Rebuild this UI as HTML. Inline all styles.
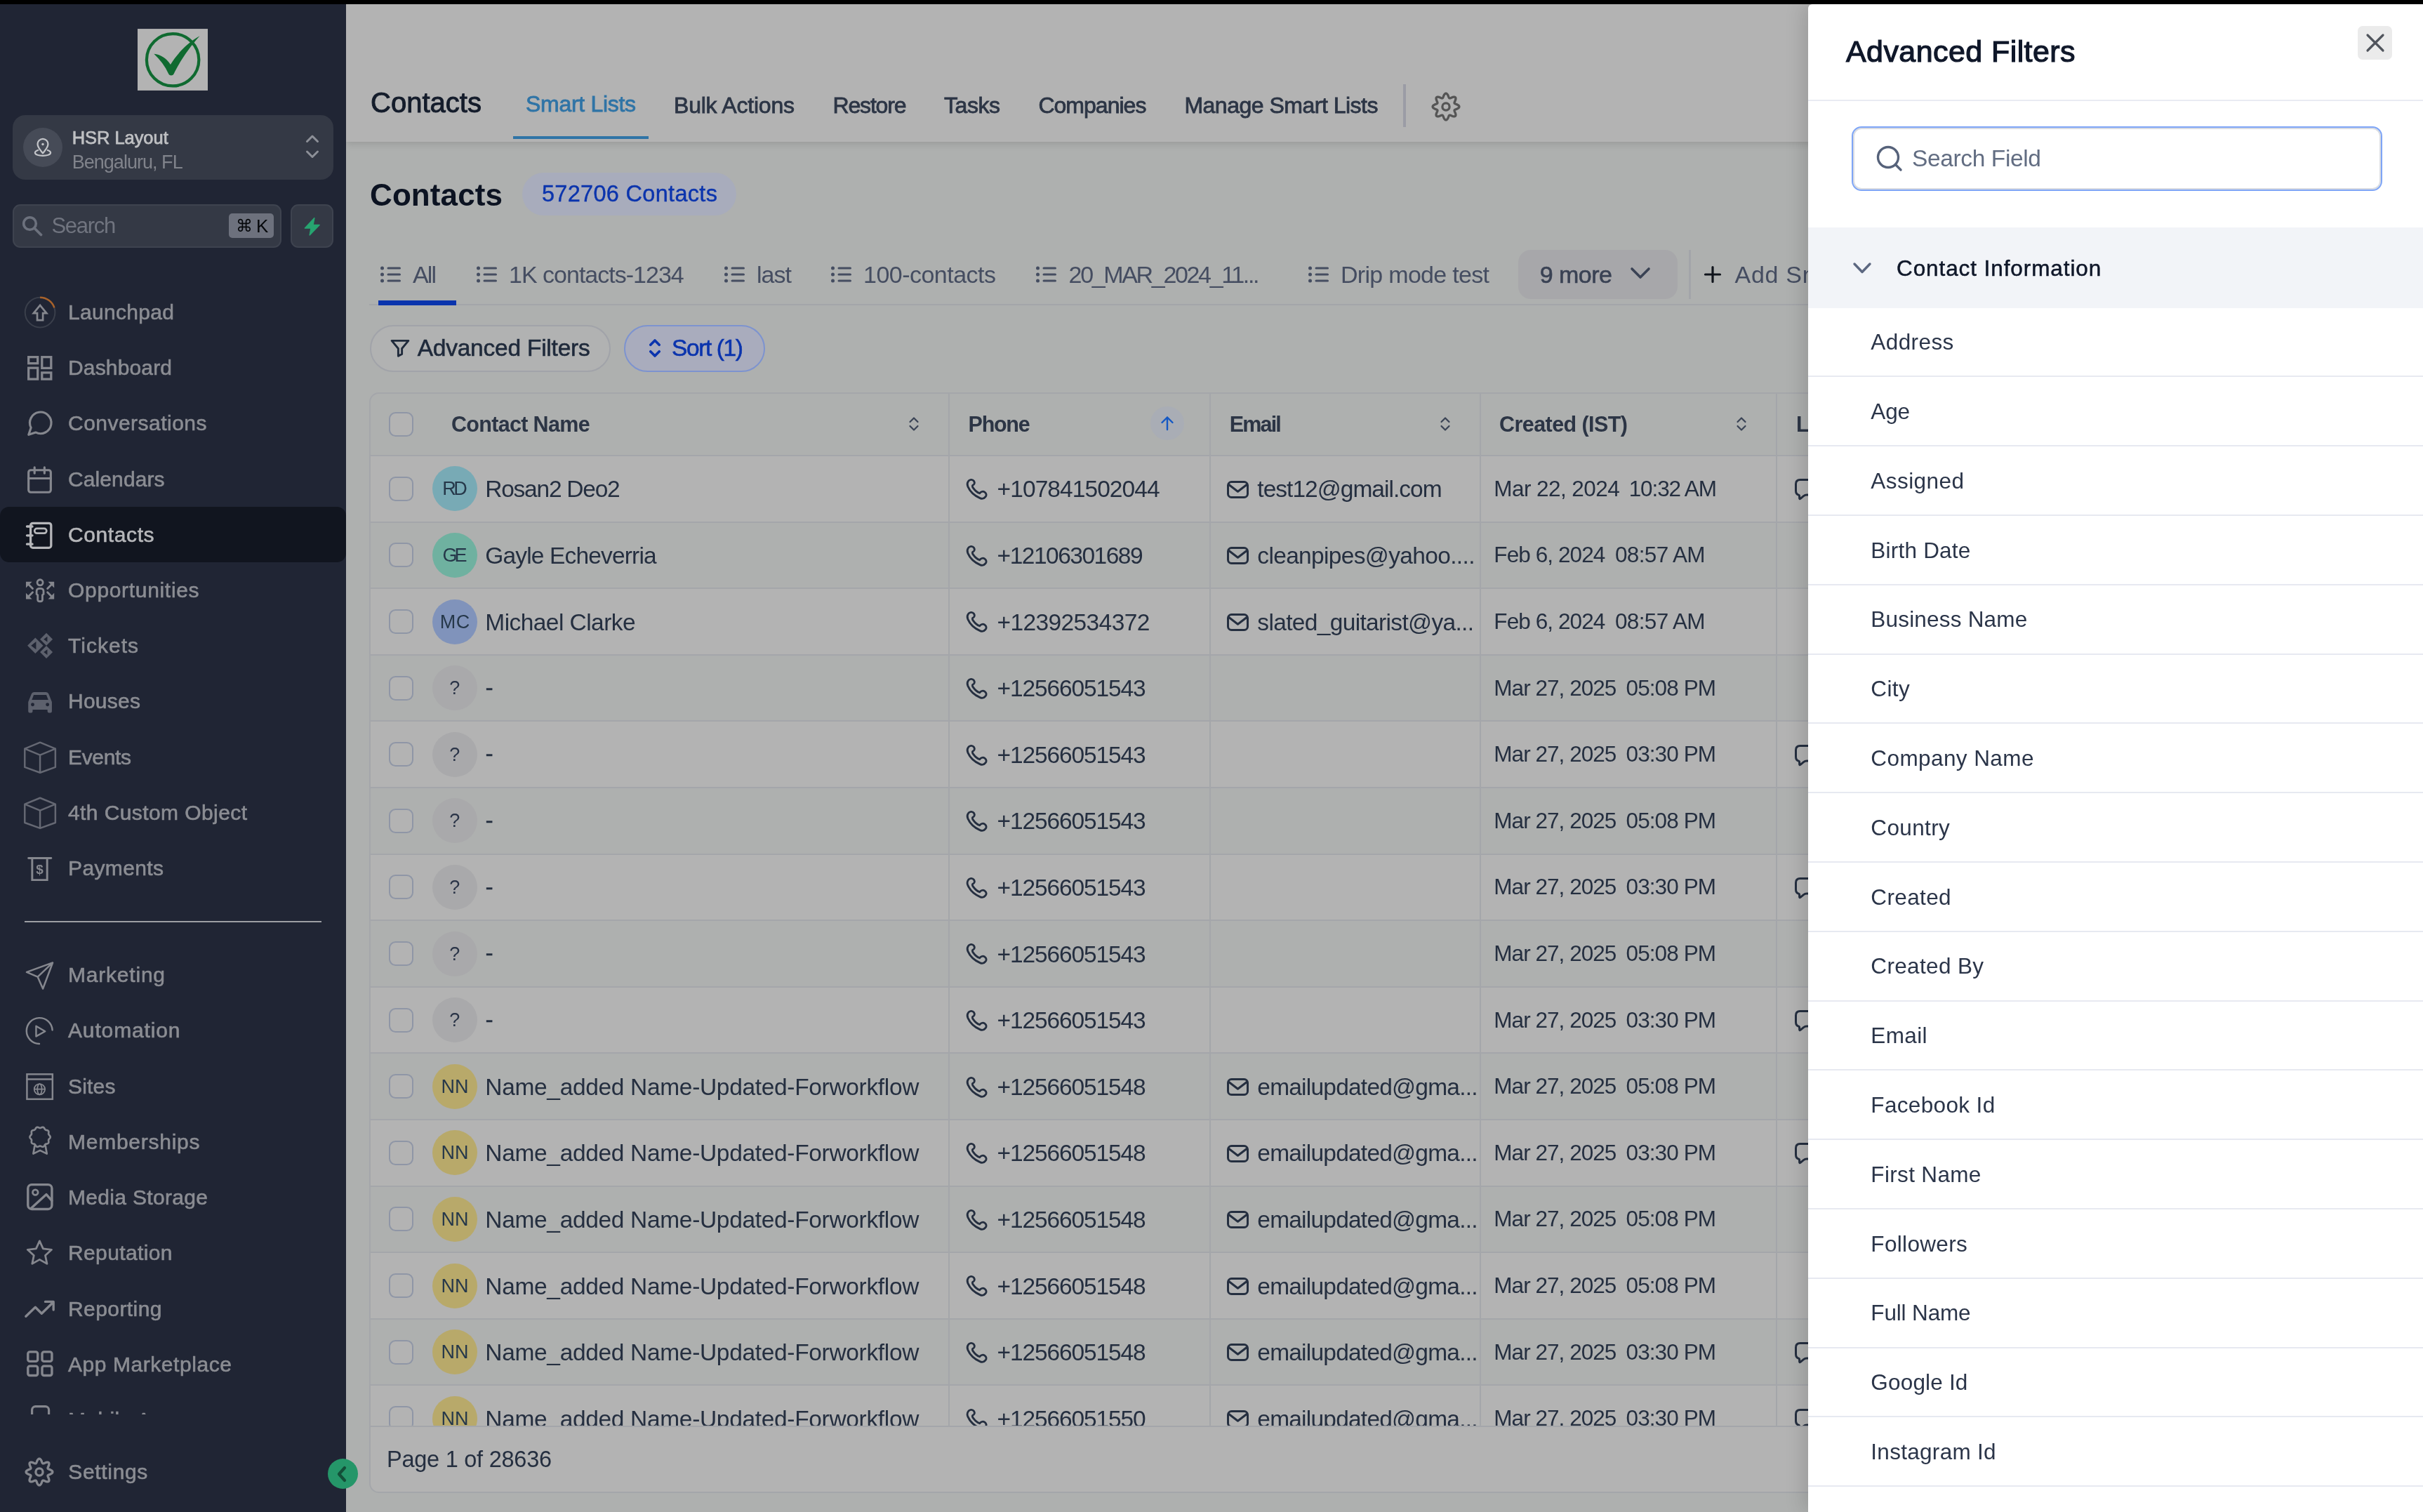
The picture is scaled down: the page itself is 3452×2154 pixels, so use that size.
<!DOCTYPE html>
<html lang="en"><head><meta charset="utf-8"><title>Contacts - Advanced Filters</title>
<style>
html,body{margin:0;padding:0;}
body{width:3452px;height:2154px;overflow:hidden;position:relative;background:#aeb0af;font-family:"Liberation Sans",sans-serif;}
span{position:absolute;white-space:nowrap;}
div{position:absolute;box-sizing:border-box;}
svg{position:absolute;overflow:visible;}
.ic{fill:none;stroke:#85878e;stroke-width:2.3;stroke-linecap:round;stroke-linejoin:round;}
#all{left:0;top:0;width:3452px;height:2154px;will-change:transform;}
</style></head><body><div id="all">

<div id="hdr" style="left:493px;top:6px;width:2959px;height:196px;background:#b3b3b3;box-shadow:0 3px 10px rgba(0,0,0,.13);"></div>
<span style="left:528.0px;top:120.0px;font-size:40px;line-height:52px;color:#141c2b;letter-spacing:0.02px;-webkit-text-stroke:0.95px #141c2b;">Contacts</span>
<span style="left:749.0px;top:127.0px;font-size:32px;line-height:42px;color:#2f74a6;letter-spacing:-0.30px;-webkit-text-stroke:0.8px #2f74a6;">Smart Lists</span>
<div style="left:731px;top:194px;width:193px;height:4px;background:#2f74a6;"></div>
<span style="left:960.0px;top:129.0px;font-size:32px;line-height:42px;color:#2c3545;letter-spacing:-0.21px;-webkit-text-stroke:0.8px #2c3545;">Bulk Actions</span>
<span style="left:1186.5px;top:129.0px;font-size:32px;line-height:42px;color:#2c3545;letter-spacing:-1.17px;-webkit-text-stroke:0.8px #2c3545;">Restore</span>
<span style="left:1345.0px;top:129.0px;font-size:32px;line-height:42px;color:#2c3545;letter-spacing:-0.45px;-webkit-text-stroke:0.8px #2c3545;">Tasks</span>
<span style="left:1479.4px;top:129.0px;font-size:32px;line-height:42px;color:#2c3545;letter-spacing:-0.98px;-webkit-text-stroke:0.8px #2c3545;">Companies</span>
<span style="left:1687.4px;top:129.0px;font-size:32px;line-height:42px;color:#2c3545;letter-spacing:-0.50px;-webkit-text-stroke:0.8px #2c3545;">Manage Smart Lists</span>
<div style="left:1999px;top:120px;width:4px;height:61px;background:#9b9ca5;"></div>
<svg style="left:2035.6px;top:127.9px" width="48" height="48" viewBox="0 0 48 48"><path d="M24.00 5.10 L24.66 5.22 L25.29 5.59 L25.88 6.16 L26.40 6.90 L26.87 7.75 L27.26 8.65 L27.61 9.53 L27.92 10.34 L28.22 11.01 L28.54 11.53 L28.91 11.85 L29.35 11.97 L29.89 11.92 L30.53 11.71 L31.27 11.40 L32.11 11.03 L33.00 10.65 L33.93 10.33 L34.85 10.11 L35.71 10.04 L36.48 10.14 L37.11 10.42 L37.58 10.89 L37.86 11.52 L37.96 12.29 L37.89 13.15 L37.67 14.07 L37.35 15.00 L36.97 15.89 L36.60 16.72 L36.29 17.47 L36.08 18.11 L36.03 18.65 L36.15 19.09 L36.47 19.46 L36.99 19.78 L37.66 20.08 L38.47 20.39 L39.35 20.74 L40.25 21.13 L41.10 21.60 L41.84 22.12 L42.41 22.71 L42.78 23.34 L42.90 24.00 L42.78 24.66 L42.41 25.29 L41.84 25.88 L41.10 26.40 L40.25 26.87 L39.35 27.26 L38.47 27.61 L37.66 27.92 L36.99 28.22 L36.47 28.54 L36.15 28.91 L36.03 29.35 L36.08 29.89 L36.29 30.53 L36.60 31.27 L36.97 32.11 L37.35 33.00 L37.67 33.93 L37.89 34.85 L37.96 35.71 L37.86 36.48 L37.58 37.11 L37.11 37.58 L36.48 37.86 L35.71 37.96 L34.85 37.89 L33.93 37.67 L33.00 37.35 L32.11 36.97 L31.27 36.60 L30.53 36.29 L29.89 36.08 L29.35 36.03 L28.91 36.15 L28.54 36.47 L28.22 36.99 L27.92 37.66 L27.61 38.47 L27.26 39.35 L26.87 40.25 L26.40 41.10 L25.88 41.84 L25.29 42.41 L24.66 42.78 L24.00 42.90 L23.34 42.78 L22.71 42.41 L22.12 41.84 L21.60 41.10 L21.13 40.25 L20.74 39.35 L20.39 38.47 L20.08 37.66 L19.78 36.99 L19.46 36.47 L19.09 36.15 L18.65 36.03 L18.11 36.08 L17.47 36.29 L16.72 36.60 L15.89 36.97 L15.00 37.35 L14.07 37.67 L13.15 37.89 L12.29 37.96 L11.52 37.86 L10.89 37.58 L10.42 37.11 L10.14 36.48 L10.04 35.71 L10.11 34.85 L10.33 33.93 L10.65 33.00 L11.03 32.11 L11.40 31.28 L11.71 30.53 L11.92 29.89 L11.97 29.35 L11.85 28.91 L11.53 28.54 L11.01 28.22 L10.34 27.92 L9.53 27.61 L8.65 27.26 L7.75 26.87 L6.90 26.40 L6.16 25.88 L5.59 25.29 L5.22 24.66 L5.10 24.00 L5.22 23.34 L5.59 22.71 L6.16 22.12 L6.90 21.60 L7.75 21.13 L8.65 20.74 L9.53 20.39 L10.34 20.08 L11.01 19.78 L11.53 19.46 L11.85 19.09 L11.97 18.65 L11.92 18.11 L11.71 17.47 L11.40 16.72 L11.03 15.89 L10.65 15.00 L10.33 14.07 L10.11 13.15 L10.04 12.29 L10.14 11.52 L10.42 10.89 L10.89 10.42 L11.52 10.14 L12.29 10.04 L13.15 10.11 L14.07 10.33 L15.00 10.65 L15.89 11.03 L16.72 11.40 L17.47 11.71 L18.11 11.92 L18.65 11.97 L19.09 11.85 L19.46 11.53 L19.78 11.01 L20.08 10.34 L20.39 9.53 L20.74 8.65 L21.13 7.75 L21.60 6.90 L22.12 6.16 L22.71 5.59 L23.34 5.22 Z" fill="none" stroke="#555555" stroke-width="3.3" stroke-linejoin="round"/><circle cx="24" cy="24" r="5.1" fill="none" stroke="#555555" stroke-width="3.3"/></svg>
<span style="left:527.0px;top:248.5px;font-size:44px;line-height:57px;color:#0c1322;font-weight:700;letter-spacing:0.11px;">Contacts</span>
<div style="left:744px;top:246px;width:305px;height:61px;border-radius:31px;background:#a8acbc;"></div>
<span style="left:772.0px;top:255.0px;font-size:32.5px;line-height:42px;color:#0b34ad;letter-spacing:0.30px;-webkit-text-stroke:0.4px #0b34ad;">572706 Contacts</span>
<div style="left:526px;top:433px;width:2926px;height:2px;background:#a3a5a9;"></div>
<div style="left:539px;top:428px;width:111px;height:7px;background:#0a34ad;"></div>
<svg style="left:541.6px;top:378.5px" width="30" height="24" viewBox="0 0 30 24"><circle cx="2.5" cy="3" r="2.5" fill="#454d61"/><rect x="9.5" y="1.4" width="19.5" height="3.2" rx="1.6" fill="#454d61"/><circle cx="2.5" cy="12" r="2.5" fill="#454d61"/><rect x="9.5" y="10.4" width="19.5" height="3.2" rx="1.6" fill="#454d61"/><circle cx="2.5" cy="21" r="2.5" fill="#454d61"/><rect x="9.5" y="19.4" width="19.5" height="3.2" rx="1.6" fill="#454d61"/></svg>
<span style="left:588.0px;top:368.5px;font-size:34px;line-height:44px;color:#454d61;letter-spacing:-1.89px;">All</span>
<svg style="left:679px;top:378.5px" width="30" height="24" viewBox="0 0 30 24"><circle cx="2.5" cy="3" r="2.5" fill="#454d61"/><rect x="9.5" y="1.4" width="19.5" height="3.2" rx="1.6" fill="#454d61"/><circle cx="2.5" cy="12" r="2.5" fill="#454d61"/><rect x="9.5" y="10.4" width="19.5" height="3.2" rx="1.6" fill="#454d61"/><circle cx="2.5" cy="21" r="2.5" fill="#454d61"/><rect x="9.5" y="19.4" width="19.5" height="3.2" rx="1.6" fill="#454d61"/></svg>
<span style="left:725.0px;top:368.5px;font-size:34px;line-height:44px;color:#454d61;letter-spacing:-0.99px;">1K contacts-1234</span>
<svg style="left:1032px;top:378.5px" width="30" height="24" viewBox="0 0 30 24"><circle cx="2.5" cy="3" r="2.5" fill="#454d61"/><rect x="9.5" y="1.4" width="19.5" height="3.2" rx="1.6" fill="#454d61"/><circle cx="2.5" cy="12" r="2.5" fill="#454d61"/><rect x="9.5" y="10.4" width="19.5" height="3.2" rx="1.6" fill="#454d61"/><circle cx="2.5" cy="21" r="2.5" fill="#454d61"/><rect x="9.5" y="19.4" width="19.5" height="3.2" rx="1.6" fill="#454d61"/></svg>
<span style="left:1078.0px;top:368.5px;font-size:34px;line-height:44px;color:#454d61;letter-spacing:-0.97px;">last</span>
<svg style="left:1184px;top:378.5px" width="30" height="24" viewBox="0 0 30 24"><circle cx="2.5" cy="3" r="2.5" fill="#454d61"/><rect x="9.5" y="1.4" width="19.5" height="3.2" rx="1.6" fill="#454d61"/><circle cx="2.5" cy="12" r="2.5" fill="#454d61"/><rect x="9.5" y="10.4" width="19.5" height="3.2" rx="1.6" fill="#454d61"/><circle cx="2.5" cy="21" r="2.5" fill="#454d61"/><rect x="9.5" y="19.4" width="19.5" height="3.2" rx="1.6" fill="#454d61"/></svg>
<span style="left:1230.0px;top:368.5px;font-size:34px;line-height:44px;color:#454d61;letter-spacing:-0.52px;">100-contacts</span>
<svg style="left:1476px;top:378.5px" width="30" height="24" viewBox="0 0 30 24"><circle cx="2.5" cy="3" r="2.5" fill="#454d61"/><rect x="9.5" y="1.4" width="19.5" height="3.2" rx="1.6" fill="#454d61"/><circle cx="2.5" cy="12" r="2.5" fill="#454d61"/><rect x="9.5" y="10.4" width="19.5" height="3.2" rx="1.6" fill="#454d61"/><circle cx="2.5" cy="21" r="2.5" fill="#454d61"/><rect x="9.5" y="19.4" width="19.5" height="3.2" rx="1.6" fill="#454d61"/></svg>
<span style="left:1522.6px;top:368.5px;font-size:34px;line-height:44px;color:#454d61;letter-spacing:-2.34px;">20_MAR_2024_11...</span>
<svg style="left:1864px;top:378.5px" width="30" height="24" viewBox="0 0 30 24"><circle cx="2.5" cy="3" r="2.5" fill="#454d61"/><rect x="9.5" y="1.4" width="19.5" height="3.2" rx="1.6" fill="#454d61"/><circle cx="2.5" cy="12" r="2.5" fill="#454d61"/><rect x="9.5" y="10.4" width="19.5" height="3.2" rx="1.6" fill="#454d61"/><circle cx="2.5" cy="21" r="2.5" fill="#454d61"/><rect x="9.5" y="19.4" width="19.5" height="3.2" rx="1.6" fill="#454d61"/></svg>
<span style="left:1910.0px;top:368.5px;font-size:34px;line-height:44px;color:#454d61;letter-spacing:-0.70px;">Drip mode test</span>
<div style="left:2163px;top:356px;width:227px;height:70px;border-radius:18px;background:#a7a7aa;"></div>
<span style="left:2193.8px;top:368.5px;font-size:34px;line-height:44px;color:#3a4254;letter-spacing:-0.56px;-webkit-text-stroke:0.6px #3a4254;">9 more</span>
<svg style="left:2323px;top:380px" width="28" height="20" viewBox="0 0 28 20"><path d="M2 3 L14 15 L26 3" fill="none" stroke="#3a4254" stroke-width="3.6" stroke-linecap="round" stroke-linejoin="round"/></svg>
<div style="left:2406px;top:356px;width:3px;height:70px;background:#a3a5a9;"></div>
<svg style="left:2428px;top:379px" width="24" height="24" viewBox="0 0 24 24"><path d="M12 1.5V22.5M1.5 12H22.5" fill="none" stroke="#10141c" stroke-width="3.2" stroke-linecap="round"/></svg>
<span style="left:2471.6px;top:368.5px;font-size:34px;line-height:44px;color:#454d61;letter-spacing:0.69px;">Add Smart List</span>
<div style="left:527px;top:463px;width:343px;height:67px;border-radius:34px;border:2px solid #a1a3a9;background:#b1b2b2;"></div>
<svg style="left:555px;top:481px" width="30" height="30" viewBox="0 0 24 24"><path d="M2.5 3.5h19l-7.4 8.9v6.4l-4.2 2.1v-8.5z" fill="none" stroke="#1f2a3b" stroke-width="2.3" stroke-linejoin="round" stroke-linecap="round"/></svg>
<span style="left:594.7px;top:474.0px;font-size:33.5px;line-height:44px;color:#1f2a3b;letter-spacing:-0.23px;-webkit-text-stroke:0.6px #1f2a3b;">Advanced Filters</span>
<div style="left:889px;top:463px;width:201px;height:67px;border-radius:34px;border:2px solid #7d93cf;background:#a9acbd;"></div>
<svg style="left:922px;top:479px" width="22" height="34" viewBox="0 0 22 34"><path d="M4.8 12.3 L11 6 L17.2 12.3 M4.8 21.7 L11 28 L17.2 21.7" fill="none" stroke="#0b34ad" stroke-width="3.6" stroke-linecap="round" stroke-linejoin="round"/></svg>
<span style="left:957.0px;top:474.0px;font-size:33.5px;line-height:44px;color:#0b34ad;letter-spacing:-1.39px;-webkit-text-stroke:0.6px #0b34ad;">Sort (1)</span>
<div style="left:526px;top:559px;width:3000px;height:1568px;border:2px solid #a4a6aa;border-radius:14px;background:#aeb0af;overflow:hidden;" id="tbl">
<div style="left:0;top:0;width:3000px;height:89px;background:#aeb0af;border-bottom:2px solid #a4a6aa;"></div>
<div style="left:26.2px;top:26.0px;width:35px;height:35px;border:2px solid #8f96a6;border-radius:9.5px;background:#b3b3b3;"></div>
<span style="left:115.0px;top:22.5px;font-size:30.5px;line-height:40px;color:#2c3545;font-weight:700;letter-spacing:-0.68px;">Contact Name</span>
<span style="left:851.6px;top:22.5px;font-size:30.5px;line-height:40px;color:#2c3545;font-weight:700;letter-spacing:-1.30px;">Phone</span>
<span style="left:1223.8px;top:22.5px;font-size:30.5px;line-height:40px;color:#2c3545;font-weight:700;letter-spacing:-1.84px;">Email</span>
<span style="left:1608.0px;top:22.5px;font-size:30.5px;line-height:40px;color:#2c3545;font-weight:700;letter-spacing:-0.57px;">Created (IST)</span>
<span style="left:2031.0px;top:22.5px;font-size:30.5px;line-height:40px;color:#2c3545;font-weight:700;letter-spacing:-0.85px;">Last Activity</span>
<svg style="left:766.4px;top:31.0px" width="16" height="24" viewBox="0 0 16 24"><path d="M2.5 9 L8 3.5 L13.5 9 M2.5 15 L8 20.5 L13.5 15" fill="none" stroke="#3a4355" stroke-width="2.2" stroke-linecap="round" stroke-linejoin="round"/></svg>
<svg style="left:1523.3px;top:31.0px" width="16" height="24" viewBox="0 0 16 24"><path d="M2.5 9 L8 3.5 L13.5 9 M2.5 15 L8 20.5 L13.5 15" fill="none" stroke="#3a4355" stroke-width="2.2" stroke-linecap="round" stroke-linejoin="round"/></svg>
<svg style="left:1945.0px;top:31.0px" width="16" height="24" viewBox="0 0 16 24"><path d="M2.5 9 L8 3.5 L13.5 9 M2.5 15 L8 20.5 L13.5 15" fill="none" stroke="#3a4355" stroke-width="2.2" stroke-linecap="round" stroke-linejoin="round"/></svg>
<div style="left:1111px;top:18px;width:48px;height:48px;border-radius:24px;background:#a9adb5;"></div>
<svg style="left:1125px;top:31px" width="20" height="22" viewBox="0 0 20 22"><path d="M10 20 V2.5 M2.5 10 L10 2.5 L17.5 10" fill="none" stroke="#1458c4" stroke-width="2.4" stroke-linecap="round" stroke-linejoin="round"/></svg>
<div style="left:0;top:89px;width:3000px;height:95px;background:#b3b3b3;border-bottom:2px solid #a4a6aa;"></div>
<div style="left:26.2px;top:117.8px;width:35px;height:35px;border:2px solid #8f96a6;border-radius:9.5px;background:#b3b3b3;"></div>
<div style="left:88px;top:103.3px;width:64px;height:64px;border-radius:32px;background:#78aab5;"></div>
<span style="left:102.2px;top:118.3px;font-size:27px;line-height:35px;color:#26384a;letter-spacing:-3.50px;">RD</span>
<span style="left:163.3px;top:114.3px;font-size:33.5px;line-height:44px;color:#252f40;letter-spacing:-1.25px;">Rosan2 Deo2</span>
<svg style="left:849.1px;top:121.1px" width="29.7" height="29.7" viewBox="230 290 400 400"><path d="M262 340 C285 300 345 295 372 335 C395 370 380 400 350 415 C335 425 345 450 360 470 C395 520 440 555 480 570 C500 545 540 520 575 545 C615 575 620 610 590 640 C565 670 530 680 495 665 C400 625 300 545 255 440 C240 405 245 365 262 340 Z" fill="none" stroke="#252f40" stroke-width="38" stroke-linejoin="round" stroke-linecap="round"/></svg>
<span style="left:892.6px;top:114.3px;font-size:33.5px;line-height:44px;color:#252f40;letter-spacing:-0.93px;">+107841502044</span>
<svg style="left:1220px;top:123.5px" width="31" height="25" viewBox="0 0 31 25"><rect x="1.5" y="1.5" width="28" height="22" rx="5" fill="none" stroke="#252f40" stroke-width="3"/><path d="M2.8 5.5 L15.5 15.3 L28.2 5.5" fill="none" stroke="#252f40" stroke-width="3" stroke-linejoin="round" stroke-linecap="round"/></svg>
<span style="left:1263.3px;top:114.3px;font-size:33.5px;line-height:44px;color:#252f40;letter-spacing:-0.97px;">test12@gmail.com</span>
<span style="left:1600.3px;top:114.8px;font-size:31.5px;line-height:41px;color:#252f40;letter-spacing:-0.56px;">Mar 22, 2024</span>
<span style="left:1792.7px;top:114.8px;font-size:31.5px;line-height:41px;color:#252f40;letter-spacing:-1.11px;">10:32 AM</span>
<svg style="left:2029px;top:121.3px" width="32" height="32" viewBox="0 0 32 32"><path d="M1.5 7.5 Q1.5 1.5 7.5 1.5 H24.5 Q30.5 1.5 30.5 7.5 V17 Q30.5 23 24.5 23 H17 Q14.5 23 12.5 24.6 L8 28.3 Q6.6 29.3 6.6 27.6 V25 Q6.6 23.3 5.2 23 Q1.5 22 1.5 17 Z" fill="none" stroke="#252f40" stroke-width="3" stroke-linejoin="round"/></svg>
<div style="left:0;top:184px;width:3000px;height:94px;background:#aeb0af;border-bottom:2px solid #a4a6aa;"></div>
<div style="left:26.2px;top:212.4px;width:35px;height:35px;border:2px solid #8f96a6;border-radius:9.5px;background:#b3b3b3;"></div>
<div style="left:88px;top:197.9px;width:64px;height:64px;border-radius:32px;background:#6fb1a0;"></div>
<span style="left:102.5px;top:212.9px;font-size:27px;line-height:35px;color:#26384a;letter-spacing:-4.01px;">GE</span>
<span style="left:163.3px;top:208.9px;font-size:33.5px;line-height:44px;color:#252f40;letter-spacing:-0.84px;">Gayle Echeverria</span>
<svg style="left:849.1px;top:215.7px" width="29.7" height="29.7" viewBox="230 290 400 400"><path d="M262 340 C285 300 345 295 372 335 C395 370 380 400 350 415 C335 425 345 450 360 470 C395 520 440 555 480 570 C500 545 540 520 575 545 C615 575 620 610 590 640 C565 670 530 680 495 665 C400 625 300 545 255 440 C240 405 245 365 262 340 Z" fill="none" stroke="#252f40" stroke-width="38" stroke-linejoin="round" stroke-linecap="round"/></svg>
<span style="left:892.6px;top:208.9px;font-size:33.5px;line-height:44px;color:#252f40;letter-spacing:-1.50px;">+12106301689</span>
<svg style="left:1220px;top:218.1px" width="31" height="25" viewBox="0 0 31 25"><rect x="1.5" y="1.5" width="28" height="22" rx="5" fill="none" stroke="#252f40" stroke-width="3"/><path d="M2.8 5.5 L15.5 15.3 L28.2 5.5" fill="none" stroke="#252f40" stroke-width="3" stroke-linejoin="round" stroke-linecap="round"/></svg>
<span style="left:1263.3px;top:208.9px;font-size:33.5px;line-height:44px;color:#252f40;letter-spacing:-0.66px;">cleanpipes@yahoo....</span>
<span style="left:1600.3px;top:209.4px;font-size:31.5px;line-height:41px;color:#252f40;letter-spacing:-0.91px;">Feb 6, 2024</span>
<span style="left:1773.0px;top:209.4px;font-size:31.5px;line-height:41px;color:#252f40;letter-spacing:-0.66px;">08:57 AM</span>
<div style="left:0;top:278px;width:3000px;height:95px;background:#b3b3b3;border-bottom:2px solid #a4a6aa;"></div>
<div style="left:26.2px;top:307.0px;width:35px;height:35px;border:2px solid #8f96a6;border-radius:9.5px;background:#b3b3b3;"></div>
<div style="left:88px;top:292.5px;width:64px;height:64px;border-radius:32px;background:#8093bb;"></div>
<span style="left:98.8px;top:307.5px;font-size:27px;line-height:35px;color:#26384a;letter-spacing:0.51px;">MC</span>
<span style="left:163.3px;top:303.5px;font-size:33.5px;line-height:44px;color:#252f40;letter-spacing:-0.56px;">Michael Clarke</span>
<svg style="left:849.1px;top:310.3px" width="29.7" height="29.7" viewBox="230 290 400 400"><path d="M262 340 C285 300 345 295 372 335 C395 370 380 400 350 415 C335 425 345 450 360 470 C395 520 440 555 480 570 C500 545 540 520 575 545 C615 575 620 610 590 640 C565 670 530 680 495 665 C400 625 300 545 255 440 C240 405 245 365 262 340 Z" fill="none" stroke="#252f40" stroke-width="38" stroke-linejoin="round" stroke-linecap="round"/></svg>
<span style="left:892.6px;top:303.5px;font-size:33.5px;line-height:44px;color:#252f40;letter-spacing:-0.62px;">+12392534372</span>
<svg style="left:1220px;top:312.7px" width="31" height="25" viewBox="0 0 31 25"><rect x="1.5" y="1.5" width="28" height="22" rx="5" fill="none" stroke="#252f40" stroke-width="3"/><path d="M2.8 5.5 L15.5 15.3 L28.2 5.5" fill="none" stroke="#252f40" stroke-width="3" stroke-linejoin="round" stroke-linecap="round"/></svg>
<span style="left:1263.3px;top:303.5px;font-size:33.5px;line-height:44px;color:#252f40;letter-spacing:-0.66px;">slated_guitarist@ya...</span>
<span style="left:1600.3px;top:304.0px;font-size:31.5px;line-height:41px;color:#252f40;letter-spacing:-0.91px;">Feb 6, 2024</span>
<span style="left:1773.0px;top:304.0px;font-size:31.5px;line-height:41px;color:#252f40;letter-spacing:-0.66px;">08:57 AM</span>
<div style="left:0;top:373px;width:3000px;height:94px;background:#aeb0af;border-bottom:2px solid #a4a6aa;"></div>
<div style="left:26.2px;top:401.6px;width:35px;height:35px;border:2px solid #8f96a6;border-radius:9.5px;background:#b3b3b3;"></div>
<div style="left:88px;top:387.1px;width:64px;height:64px;border-radius:32px;background:#a9a9ab;"></div>
<span style="left:112.2px;top:402.1px;font-size:27px;line-height:35px;color:#2a3447;">?</span>
<span style="left:163.5px;top:396.7px;font-size:33.5px;line-height:44px;color:#252f40;-webkit-text-stroke:0.3px #252f40;">-</span>
<svg style="left:849.1px;top:404.9px" width="29.7" height="29.7" viewBox="230 290 400 400"><path d="M262 340 C285 300 345 295 372 335 C395 370 380 400 350 415 C335 425 345 450 360 470 C395 520 440 555 480 570 C500 545 540 520 575 545 C615 575 620 610 590 640 C565 670 530 680 495 665 C400 625 300 545 255 440 C240 405 245 365 262 340 Z" fill="none" stroke="#252f40" stroke-width="38" stroke-linejoin="round" stroke-linecap="round"/></svg>
<span style="left:892.6px;top:398.1px;font-size:33.5px;line-height:44px;color:#252f40;letter-spacing:-1.14px;">+12566051543</span>
<span style="left:1600.3px;top:398.6px;font-size:31.5px;line-height:41px;color:#252f40;letter-spacing:-0.96px;">Mar 27, 2025</span>
<span style="left:1788.6px;top:398.6px;font-size:31.5px;line-height:41px;color:#252f40;letter-spacing:-0.92px;">05:08 PM</span>
<div style="left:0;top:467px;width:3000px;height:95px;background:#b3b3b3;border-bottom:2px solid #a4a6aa;"></div>
<div style="left:26.2px;top:496.2px;width:35px;height:35px;border:2px solid #8f96a6;border-radius:9.5px;background:#b3b3b3;"></div>
<div style="left:88px;top:481.7px;width:64px;height:64px;border-radius:32px;background:#a9a9ab;"></div>
<span style="left:112.2px;top:496.7px;font-size:27px;line-height:35px;color:#2a3447;">?</span>
<span style="left:163.5px;top:491.3px;font-size:33.5px;line-height:44px;color:#252f40;-webkit-text-stroke:0.3px #252f40;">-</span>
<svg style="left:849.1px;top:499.5px" width="29.7" height="29.7" viewBox="230 290 400 400"><path d="M262 340 C285 300 345 295 372 335 C395 370 380 400 350 415 C335 425 345 450 360 470 C395 520 440 555 480 570 C500 545 540 520 575 545 C615 575 620 610 590 640 C565 670 530 680 495 665 C400 625 300 545 255 440 C240 405 245 365 262 340 Z" fill="none" stroke="#252f40" stroke-width="38" stroke-linejoin="round" stroke-linecap="round"/></svg>
<span style="left:892.6px;top:492.7px;font-size:33.5px;line-height:44px;color:#252f40;letter-spacing:-1.14px;">+12566051543</span>
<span style="left:1600.3px;top:493.2px;font-size:31.5px;line-height:41px;color:#252f40;letter-spacing:-0.96px;">Mar 27, 2025</span>
<span style="left:1788.6px;top:493.2px;font-size:31.5px;line-height:41px;color:#252f40;letter-spacing:-0.92px;">03:30 PM</span>
<svg style="left:2029px;top:499.7px" width="32" height="32" viewBox="0 0 32 32"><path d="M1.5 7.5 Q1.5 1.5 7.5 1.5 H24.5 Q30.5 1.5 30.5 7.5 V17 Q30.5 23 24.5 23 H17 Q14.5 23 12.5 24.6 L8 28.3 Q6.6 29.3 6.6 27.6 V25 Q6.6 23.3 5.2 23 Q1.5 22 1.5 17 Z" fill="none" stroke="#252f40" stroke-width="3" stroke-linejoin="round"/></svg>
<div style="left:0;top:562px;width:3000px;height:95px;background:#aeb0af;border-bottom:2px solid #a4a6aa;"></div>
<div style="left:26.2px;top:590.8px;width:35px;height:35px;border:2px solid #8f96a6;border-radius:9.5px;background:#b3b3b3;"></div>
<div style="left:88px;top:576.3px;width:64px;height:64px;border-radius:32px;background:#a9a9ab;"></div>
<span style="left:112.2px;top:591.3px;font-size:27px;line-height:35px;color:#2a3447;">?</span>
<span style="left:163.5px;top:585.9px;font-size:33.5px;line-height:44px;color:#252f40;-webkit-text-stroke:0.3px #252f40;">-</span>
<svg style="left:849.1px;top:594.1px" width="29.7" height="29.7" viewBox="230 290 400 400"><path d="M262 340 C285 300 345 295 372 335 C395 370 380 400 350 415 C335 425 345 450 360 470 C395 520 440 555 480 570 C500 545 540 520 575 545 C615 575 620 610 590 640 C565 670 530 680 495 665 C400 625 300 545 255 440 C240 405 245 365 262 340 Z" fill="none" stroke="#252f40" stroke-width="38" stroke-linejoin="round" stroke-linecap="round"/></svg>
<span style="left:892.6px;top:587.3px;font-size:33.5px;line-height:44px;color:#252f40;letter-spacing:-1.14px;">+12566051543</span>
<span style="left:1600.3px;top:587.8px;font-size:31.5px;line-height:41px;color:#252f40;letter-spacing:-0.96px;">Mar 27, 2025</span>
<span style="left:1788.6px;top:587.8px;font-size:31.5px;line-height:41px;color:#252f40;letter-spacing:-0.92px;">05:08 PM</span>
<div style="left:0;top:657px;width:3000px;height:94px;background:#b3b3b3;border-bottom:2px solid #a4a6aa;"></div>
<div style="left:26.2px;top:685.4px;width:35px;height:35px;border:2px solid #8f96a6;border-radius:9.5px;background:#b3b3b3;"></div>
<div style="left:88px;top:670.9px;width:64px;height:64px;border-radius:32px;background:#a9a9ab;"></div>
<span style="left:112.2px;top:685.9px;font-size:27px;line-height:35px;color:#2a3447;">?</span>
<span style="left:163.5px;top:680.5px;font-size:33.5px;line-height:44px;color:#252f40;-webkit-text-stroke:0.3px #252f40;">-</span>
<svg style="left:849.1px;top:688.7px" width="29.7" height="29.7" viewBox="230 290 400 400"><path d="M262 340 C285 300 345 295 372 335 C395 370 380 400 350 415 C335 425 345 450 360 470 C395 520 440 555 480 570 C500 545 540 520 575 545 C615 575 620 610 590 640 C565 670 530 680 495 665 C400 625 300 545 255 440 C240 405 245 365 262 340 Z" fill="none" stroke="#252f40" stroke-width="38" stroke-linejoin="round" stroke-linecap="round"/></svg>
<span style="left:892.6px;top:681.9px;font-size:33.5px;line-height:44px;color:#252f40;letter-spacing:-1.14px;">+12566051543</span>
<span style="left:1600.3px;top:682.4px;font-size:31.5px;line-height:41px;color:#252f40;letter-spacing:-0.96px;">Mar 27, 2025</span>
<span style="left:1788.6px;top:682.4px;font-size:31.5px;line-height:41px;color:#252f40;letter-spacing:-0.92px;">03:30 PM</span>
<svg style="left:2029px;top:688.9px" width="32" height="32" viewBox="0 0 32 32"><path d="M1.5 7.5 Q1.5 1.5 7.5 1.5 H24.5 Q30.5 1.5 30.5 7.5 V17 Q30.5 23 24.5 23 H17 Q14.5 23 12.5 24.6 L8 28.3 Q6.6 29.3 6.6 27.6 V25 Q6.6 23.3 5.2 23 Q1.5 22 1.5 17 Z" fill="none" stroke="#252f40" stroke-width="3" stroke-linejoin="round"/></svg>
<div style="left:0;top:751px;width:3000px;height:95px;background:#aeb0af;border-bottom:2px solid #a4a6aa;"></div>
<div style="left:26.2px;top:780.0px;width:35px;height:35px;border:2px solid #8f96a6;border-radius:9.5px;background:#b3b3b3;"></div>
<div style="left:88px;top:765.5px;width:64px;height:64px;border-radius:32px;background:#a9a9ab;"></div>
<span style="left:112.2px;top:780.5px;font-size:27px;line-height:35px;color:#2a3447;">?</span>
<span style="left:163.5px;top:775.1px;font-size:33.5px;line-height:44px;color:#252f40;-webkit-text-stroke:0.3px #252f40;">-</span>
<svg style="left:849.1px;top:783.3px" width="29.7" height="29.7" viewBox="230 290 400 400"><path d="M262 340 C285 300 345 295 372 335 C395 370 380 400 350 415 C335 425 345 450 360 470 C395 520 440 555 480 570 C500 545 540 520 575 545 C615 575 620 610 590 640 C565 670 530 680 495 665 C400 625 300 545 255 440 C240 405 245 365 262 340 Z" fill="none" stroke="#252f40" stroke-width="38" stroke-linejoin="round" stroke-linecap="round"/></svg>
<span style="left:892.6px;top:776.5px;font-size:33.5px;line-height:44px;color:#252f40;letter-spacing:-1.14px;">+12566051543</span>
<span style="left:1600.3px;top:777.0px;font-size:31.5px;line-height:41px;color:#252f40;letter-spacing:-0.96px;">Mar 27, 2025</span>
<span style="left:1788.6px;top:777.0px;font-size:31.5px;line-height:41px;color:#252f40;letter-spacing:-0.92px;">05:08 PM</span>
<div style="left:0;top:846px;width:3000px;height:94px;background:#b3b3b3;border-bottom:2px solid #a4a6aa;"></div>
<div style="left:26.2px;top:874.6px;width:35px;height:35px;border:2px solid #8f96a6;border-radius:9.5px;background:#b3b3b3;"></div>
<div style="left:88px;top:860.1px;width:64px;height:64px;border-radius:32px;background:#a9a9ab;"></div>
<span style="left:112.2px;top:875.1px;font-size:27px;line-height:35px;color:#2a3447;">?</span>
<span style="left:163.5px;top:869.7px;font-size:33.5px;line-height:44px;color:#252f40;-webkit-text-stroke:0.3px #252f40;">-</span>
<svg style="left:849.1px;top:877.9px" width="29.7" height="29.7" viewBox="230 290 400 400"><path d="M262 340 C285 300 345 295 372 335 C395 370 380 400 350 415 C335 425 345 450 360 470 C395 520 440 555 480 570 C500 545 540 520 575 545 C615 575 620 610 590 640 C565 670 530 680 495 665 C400 625 300 545 255 440 C240 405 245 365 262 340 Z" fill="none" stroke="#252f40" stroke-width="38" stroke-linejoin="round" stroke-linecap="round"/></svg>
<span style="left:892.6px;top:871.1px;font-size:33.5px;line-height:44px;color:#252f40;letter-spacing:-1.14px;">+12566051543</span>
<span style="left:1600.3px;top:871.6px;font-size:31.5px;line-height:41px;color:#252f40;letter-spacing:-0.96px;">Mar 27, 2025</span>
<span style="left:1788.6px;top:871.6px;font-size:31.5px;line-height:41px;color:#252f40;letter-spacing:-0.92px;">03:30 PM</span>
<svg style="left:2029px;top:878.1px" width="32" height="32" viewBox="0 0 32 32"><path d="M1.5 7.5 Q1.5 1.5 7.5 1.5 H24.5 Q30.5 1.5 30.5 7.5 V17 Q30.5 23 24.5 23 H17 Q14.5 23 12.5 24.6 L8 28.3 Q6.6 29.3 6.6 27.6 V25 Q6.6 23.3 5.2 23 Q1.5 22 1.5 17 Z" fill="none" stroke="#252f40" stroke-width="3" stroke-linejoin="round"/></svg>
<div style="left:0;top:940px;width:3000px;height:95px;background:#aeb0af;border-bottom:2px solid #a4a6aa;"></div>
<div style="left:26.2px;top:969.2px;width:35px;height:35px;border:2px solid #8f96a6;border-radius:9.5px;background:#b3b3b3;"></div>
<div style="left:88px;top:954.7px;width:64px;height:64px;border-radius:32px;background:#b8a96a;"></div>
<span style="left:100.5px;top:969.7px;font-size:27px;line-height:35px;color:#26384a;">NN</span>
<span style="left:163.3px;top:965.7px;font-size:33.5px;line-height:44px;color:#252f40;letter-spacing:-0.33px;">Name_added Name-Updated-Forworkflow</span>
<svg style="left:849.1px;top:972.5px" width="29.7" height="29.7" viewBox="230 290 400 400"><path d="M262 340 C285 300 345 295 372 335 C395 370 380 400 350 415 C335 425 345 450 360 470 C395 520 440 555 480 570 C500 545 540 520 575 545 C615 575 620 610 590 640 C565 670 530 680 495 665 C400 625 300 545 255 440 C240 405 245 365 262 340 Z" fill="none" stroke="#252f40" stroke-width="38" stroke-linejoin="round" stroke-linecap="round"/></svg>
<span style="left:892.6px;top:965.7px;font-size:33.5px;line-height:44px;color:#252f40;letter-spacing:-1.14px;">+12566051548</span>
<svg style="left:1220px;top:974.9px" width="31" height="25" viewBox="0 0 31 25"><rect x="1.5" y="1.5" width="28" height="22" rx="5" fill="none" stroke="#252f40" stroke-width="3"/><path d="M2.8 5.5 L15.5 15.3 L28.2 5.5" fill="none" stroke="#252f40" stroke-width="3" stroke-linejoin="round" stroke-linecap="round"/></svg>
<span style="left:1263.3px;top:965.7px;font-size:33.5px;line-height:44px;color:#252f40;letter-spacing:-0.78px;">emailupdated@gma...</span>
<span style="left:1600.3px;top:966.2px;font-size:31.5px;line-height:41px;color:#252f40;letter-spacing:-0.96px;">Mar 27, 2025</span>
<span style="left:1788.6px;top:966.2px;font-size:31.5px;line-height:41px;color:#252f40;letter-spacing:-0.92px;">05:08 PM</span>
<div style="left:0;top:1035px;width:3000px;height:95px;background:#b3b3b3;border-bottom:2px solid #a4a6aa;"></div>
<div style="left:26.2px;top:1063.8px;width:35px;height:35px;border:2px solid #8f96a6;border-radius:9.5px;background:#b3b3b3;"></div>
<div style="left:88px;top:1049.3px;width:64px;height:64px;border-radius:32px;background:#b8a96a;"></div>
<span style="left:100.5px;top:1064.3px;font-size:27px;line-height:35px;color:#26384a;">NN</span>
<span style="left:163.3px;top:1060.3px;font-size:33.5px;line-height:44px;color:#252f40;letter-spacing:-0.33px;">Name_added Name-Updated-Forworkflow</span>
<svg style="left:849.1px;top:1067.1px" width="29.7" height="29.7" viewBox="230 290 400 400"><path d="M262 340 C285 300 345 295 372 335 C395 370 380 400 350 415 C335 425 345 450 360 470 C395 520 440 555 480 570 C500 545 540 520 575 545 C615 575 620 610 590 640 C565 670 530 680 495 665 C400 625 300 545 255 440 C240 405 245 365 262 340 Z" fill="none" stroke="#252f40" stroke-width="38" stroke-linejoin="round" stroke-linecap="round"/></svg>
<span style="left:892.6px;top:1060.3px;font-size:33.5px;line-height:44px;color:#252f40;letter-spacing:-1.14px;">+12566051548</span>
<svg style="left:1220px;top:1069.5px" width="31" height="25" viewBox="0 0 31 25"><rect x="1.5" y="1.5" width="28" height="22" rx="5" fill="none" stroke="#252f40" stroke-width="3"/><path d="M2.8 5.5 L15.5 15.3 L28.2 5.5" fill="none" stroke="#252f40" stroke-width="3" stroke-linejoin="round" stroke-linecap="round"/></svg>
<span style="left:1263.3px;top:1060.3px;font-size:33.5px;line-height:44px;color:#252f40;letter-spacing:-0.78px;">emailupdated@gma...</span>
<span style="left:1600.3px;top:1060.8px;font-size:31.5px;line-height:41px;color:#252f40;letter-spacing:-0.96px;">Mar 27, 2025</span>
<span style="left:1788.6px;top:1060.8px;font-size:31.5px;line-height:41px;color:#252f40;letter-spacing:-0.92px;">03:30 PM</span>
<svg style="left:2029px;top:1067.3px" width="32" height="32" viewBox="0 0 32 32"><path d="M1.5 7.5 Q1.5 1.5 7.5 1.5 H24.5 Q30.5 1.5 30.5 7.5 V17 Q30.5 23 24.5 23 H17 Q14.5 23 12.5 24.6 L8 28.3 Q6.6 29.3 6.6 27.6 V25 Q6.6 23.3 5.2 23 Q1.5 22 1.5 17 Z" fill="none" stroke="#252f40" stroke-width="3" stroke-linejoin="round"/></svg>
<div style="left:0;top:1130px;width:3000px;height:94px;background:#aeb0af;border-bottom:2px solid #a4a6aa;"></div>
<div style="left:26.2px;top:1158.4px;width:35px;height:35px;border:2px solid #8f96a6;border-radius:9.5px;background:#b3b3b3;"></div>
<div style="left:88px;top:1143.9px;width:64px;height:64px;border-radius:32px;background:#b8a96a;"></div>
<span style="left:100.5px;top:1158.9px;font-size:27px;line-height:35px;color:#26384a;">NN</span>
<span style="left:163.3px;top:1154.9px;font-size:33.5px;line-height:44px;color:#252f40;letter-spacing:-0.33px;">Name_added Name-Updated-Forworkflow</span>
<svg style="left:849.1px;top:1161.7px" width="29.7" height="29.7" viewBox="230 290 400 400"><path d="M262 340 C285 300 345 295 372 335 C395 370 380 400 350 415 C335 425 345 450 360 470 C395 520 440 555 480 570 C500 545 540 520 575 545 C615 575 620 610 590 640 C565 670 530 680 495 665 C400 625 300 545 255 440 C240 405 245 365 262 340 Z" fill="none" stroke="#252f40" stroke-width="38" stroke-linejoin="round" stroke-linecap="round"/></svg>
<span style="left:892.6px;top:1154.9px;font-size:33.5px;line-height:44px;color:#252f40;letter-spacing:-1.14px;">+12566051548</span>
<svg style="left:1220px;top:1164.1px" width="31" height="25" viewBox="0 0 31 25"><rect x="1.5" y="1.5" width="28" height="22" rx="5" fill="none" stroke="#252f40" stroke-width="3"/><path d="M2.8 5.5 L15.5 15.3 L28.2 5.5" fill="none" stroke="#252f40" stroke-width="3" stroke-linejoin="round" stroke-linecap="round"/></svg>
<span style="left:1263.3px;top:1154.9px;font-size:33.5px;line-height:44px;color:#252f40;letter-spacing:-0.78px;">emailupdated@gma...</span>
<span style="left:1600.3px;top:1155.4px;font-size:31.5px;line-height:41px;color:#252f40;letter-spacing:-0.96px;">Mar 27, 2025</span>
<span style="left:1788.6px;top:1155.4px;font-size:31.5px;line-height:41px;color:#252f40;letter-spacing:-0.92px;">05:08 PM</span>
<div style="left:0;top:1224px;width:3000px;height:95px;background:#b3b3b3;border-bottom:2px solid #a4a6aa;"></div>
<div style="left:26.2px;top:1253.0px;width:35px;height:35px;border:2px solid #8f96a6;border-radius:9.5px;background:#b3b3b3;"></div>
<div style="left:88px;top:1238.5px;width:64px;height:64px;border-radius:32px;background:#b8a96a;"></div>
<span style="left:100.5px;top:1253.5px;font-size:27px;line-height:35px;color:#26384a;">NN</span>
<span style="left:163.3px;top:1249.5px;font-size:33.5px;line-height:44px;color:#252f40;letter-spacing:-0.33px;">Name_added Name-Updated-Forworkflow</span>
<svg style="left:849.1px;top:1256.3px" width="29.7" height="29.7" viewBox="230 290 400 400"><path d="M262 340 C285 300 345 295 372 335 C395 370 380 400 350 415 C335 425 345 450 360 470 C395 520 440 555 480 570 C500 545 540 520 575 545 C615 575 620 610 590 640 C565 670 530 680 495 665 C400 625 300 545 255 440 C240 405 245 365 262 340 Z" fill="none" stroke="#252f40" stroke-width="38" stroke-linejoin="round" stroke-linecap="round"/></svg>
<span style="left:892.6px;top:1249.5px;font-size:33.5px;line-height:44px;color:#252f40;letter-spacing:-1.14px;">+12566051548</span>
<svg style="left:1220px;top:1258.7px" width="31" height="25" viewBox="0 0 31 25"><rect x="1.5" y="1.5" width="28" height="22" rx="5" fill="none" stroke="#252f40" stroke-width="3"/><path d="M2.8 5.5 L15.5 15.3 L28.2 5.5" fill="none" stroke="#252f40" stroke-width="3" stroke-linejoin="round" stroke-linecap="round"/></svg>
<span style="left:1263.3px;top:1249.5px;font-size:33.5px;line-height:44px;color:#252f40;letter-spacing:-0.78px;">emailupdated@gma...</span>
<span style="left:1600.3px;top:1250.0px;font-size:31.5px;line-height:41px;color:#252f40;letter-spacing:-0.96px;">Mar 27, 2025</span>
<span style="left:1788.6px;top:1250.0px;font-size:31.5px;line-height:41px;color:#252f40;letter-spacing:-0.92px;">05:08 PM</span>
<div style="left:0;top:1319px;width:3000px;height:94px;background:#aeb0af;border-bottom:2px solid #a4a6aa;"></div>
<div style="left:26.2px;top:1347.6px;width:35px;height:35px;border:2px solid #8f96a6;border-radius:9.5px;background:#b3b3b3;"></div>
<div style="left:88px;top:1333.1px;width:64px;height:64px;border-radius:32px;background:#b8a96a;"></div>
<span style="left:100.5px;top:1348.1px;font-size:27px;line-height:35px;color:#26384a;">NN</span>
<span style="left:163.3px;top:1344.1px;font-size:33.5px;line-height:44px;color:#252f40;letter-spacing:-0.33px;">Name_added Name-Updated-Forworkflow</span>
<svg style="left:849.1px;top:1350.9px" width="29.7" height="29.7" viewBox="230 290 400 400"><path d="M262 340 C285 300 345 295 372 335 C395 370 380 400 350 415 C335 425 345 450 360 470 C395 520 440 555 480 570 C500 545 540 520 575 545 C615 575 620 610 590 640 C565 670 530 680 495 665 C400 625 300 545 255 440 C240 405 245 365 262 340 Z" fill="none" stroke="#252f40" stroke-width="38" stroke-linejoin="round" stroke-linecap="round"/></svg>
<span style="left:892.6px;top:1344.1px;font-size:33.5px;line-height:44px;color:#252f40;letter-spacing:-1.14px;">+12566051548</span>
<svg style="left:1220px;top:1353.3px" width="31" height="25" viewBox="0 0 31 25"><rect x="1.5" y="1.5" width="28" height="22" rx="5" fill="none" stroke="#252f40" stroke-width="3"/><path d="M2.8 5.5 L15.5 15.3 L28.2 5.5" fill="none" stroke="#252f40" stroke-width="3" stroke-linejoin="round" stroke-linecap="round"/></svg>
<span style="left:1263.3px;top:1344.1px;font-size:33.5px;line-height:44px;color:#252f40;letter-spacing:-0.78px;">emailupdated@gma...</span>
<span style="left:1600.3px;top:1344.6px;font-size:31.5px;line-height:41px;color:#252f40;letter-spacing:-0.96px;">Mar 27, 2025</span>
<span style="left:1788.6px;top:1344.6px;font-size:31.5px;line-height:41px;color:#252f40;letter-spacing:-0.92px;">03:30 PM</span>
<svg style="left:2029px;top:1351.1px" width="32" height="32" viewBox="0 0 32 32"><path d="M1.5 7.5 Q1.5 1.5 7.5 1.5 H24.5 Q30.5 1.5 30.5 7.5 V17 Q30.5 23 24.5 23 H17 Q14.5 23 12.5 24.6 L8 28.3 Q6.6 29.3 6.6 27.6 V25 Q6.6 23.3 5.2 23 Q1.5 22 1.5 17 Z" fill="none" stroke="#252f40" stroke-width="3" stroke-linejoin="round"/></svg>
<div style="left:0;top:1413px;width:3000px;height:95px;background:#b3b3b3;border-bottom:2px solid #a4a6aa;"></div>
<div style="left:26.2px;top:1442.2px;width:35px;height:35px;border:2px solid #8f96a6;border-radius:9.5px;background:#b3b3b3;"></div>
<div style="left:88px;top:1427.7px;width:64px;height:64px;border-radius:32px;background:#b8a96a;"></div>
<span style="left:100.5px;top:1442.7px;font-size:27px;line-height:35px;color:#26384a;">NN</span>
<span style="left:163.3px;top:1438.7px;font-size:33.5px;line-height:44px;color:#252f40;letter-spacing:-0.33px;">Name_added Name-Updated-Forworkflow</span>
<svg style="left:849.1px;top:1445.5px" width="29.7" height="29.7" viewBox="230 290 400 400"><path d="M262 340 C285 300 345 295 372 335 C395 370 380 400 350 415 C335 425 345 450 360 470 C395 520 440 555 480 570 C500 545 540 520 575 545 C615 575 620 610 590 640 C565 670 530 680 495 665 C400 625 300 545 255 440 C240 405 245 365 262 340 Z" fill="none" stroke="#252f40" stroke-width="38" stroke-linejoin="round" stroke-linecap="round"/></svg>
<span style="left:892.6px;top:1438.7px;font-size:33.5px;line-height:44px;color:#252f40;letter-spacing:-1.14px;">+12566051550</span>
<svg style="left:1220px;top:1447.9px" width="31" height="25" viewBox="0 0 31 25"><rect x="1.5" y="1.5" width="28" height="22" rx="5" fill="none" stroke="#252f40" stroke-width="3"/><path d="M2.8 5.5 L15.5 15.3 L28.2 5.5" fill="none" stroke="#252f40" stroke-width="3" stroke-linejoin="round" stroke-linecap="round"/></svg>
<span style="left:1263.3px;top:1438.7px;font-size:33.5px;line-height:44px;color:#252f40;letter-spacing:-0.78px;">emailupdated@gma...</span>
<span style="left:1600.3px;top:1439.2px;font-size:31.5px;line-height:41px;color:#252f40;letter-spacing:-0.96px;">Mar 27, 2025</span>
<span style="left:1788.6px;top:1439.2px;font-size:31.5px;line-height:41px;color:#252f40;letter-spacing:-0.92px;">03:30 PM</span>
<svg style="left:2029px;top:1445.7px" width="32" height="32" viewBox="0 0 32 32"><path d="M1.5 7.5 Q1.5 1.5 7.5 1.5 H24.5 Q30.5 1.5 30.5 7.5 V17 Q30.5 23 24.5 23 H17 Q14.5 23 12.5 24.6 L8 28.3 Q6.6 29.3 6.6 27.6 V25 Q6.6 23.3 5.2 23 Q1.5 22 1.5 17 Z" fill="none" stroke="#252f40" stroke-width="3" stroke-linejoin="round"/></svg>
<div style="left:822.5px;top:0;width:2px;height:1470px;background:#a4a6aa;"></div>
<div style="left:1195.0px;top:0;width:2px;height:1470px;background:#a4a6aa;"></div>
<div style="left:1580.0px;top:0;width:2px;height:1470px;background:#a4a6aa;"></div>
<div style="left:2002.0px;top:0;width:2px;height:1470px;background:#a4a6aa;"></div>
<div style="left:0;top:1470px;width:3000px;height:96px;background:#b3b3b3;border-top:2px solid #a4a6aa;"></div>
<span style="left:23.0px;top:1497.0px;font-size:32.5px;line-height:42px;color:#252f40;letter-spacing:-0.25px;">Page 1 of 28636</span>
</div>
<div id="sb" style="left:0;top:6px;width:493px;height:2148px;background:#202534;"></div>
<svg style="left:196px;top:41px" width="100" height="88" viewBox="790 165 403 354"><rect x="790" y="165" width="403" height="354" fill="#b3b3b3"/><circle cx="992" cy="343" r="150" fill="none" stroke="#0f6a30" stroke-width="17"/><path d="M884 309 C 924 312, 956 336, 979 370 C 1014 312, 1074 246, 1147 206 C 1086 272, 1030 356, 998 424 C 992 436, 974 436, 968 424 C 948 380, 920 342, 884 309 Z" fill="#0f6a30"/></svg>
<div style="left:18px;top:164px;width:457px;height:92px;border-radius:18px;background:#343945;"></div>
<div style="left:33px;top:182px;width:56px;height:56px;border-radius:28px;background:#464b57;"></div>
<svg style="left:33px;top:182px" width="56" height="56" viewBox="133 733 226 226"><path d="M246 880 C 232 862, 216 846, 216 827 A30 30 0 1 1 276 827 C 276 846, 260 862, 246 880 Z" fill="none" stroke="#c3c5c9" stroke-width="9" stroke-linejoin="round"/><circle cx="246" cy="828" r="7" fill="#c3c5c9"/><path d="M218 862 C 192 870, 192 893, 246 894 C 300 893, 300 870, 274 862" fill="none" stroke="#c3c5c9" stroke-width="9" stroke-linecap="round"/></svg>
<span style="left:102.7px;top:180.0px;font-size:25.5px;line-height:33px;color:#bfc0c3;letter-spacing:-0.05px;-webkit-text-stroke:0.75px #bfc0c3;">HSR Layout</span>
<span style="left:102.7px;top:213.5px;font-size:27px;line-height:35px;color:#80838b;letter-spacing:-0.97px;">Bengaluru, FL</span>
<svg style="left:434px;top:190px" width="22" height="38" viewBox="0 0 22 38"><path d="M3.5 11.5 L11 4 L18.5 11.5 M3.5 26 L11 33.5 L18.5 26" fill="none" stroke="#8d9098" stroke-width="3" stroke-linecap="round" stroke-linejoin="round"/></svg>
<div style="left:18px;top:291px;width:383px;height:62px;border-radius:11px;background:#343945;border:2px solid #3e434f;"></div>
<svg style="left:31px;top:307px" width="30" height="30" viewBox="0 0 30 30"><circle cx="11.5" cy="11.5" r="8.8" fill="none" stroke="#6c717d" stroke-width="3.6"/><path d="M18 18 L27.5 27.5" stroke="#6c717d" stroke-width="3.8" stroke-linecap="round"/></svg>
<span style="left:73.4px;top:302.0px;font-size:31px;line-height:40px;color:#70747f;letter-spacing:-1.25px;">Search</span>
<div style="left:326px;top:304px;width:64px;height:35px;border-radius:5px;background:#6d717d;"></div>
<span style="left:336.0px;top:306.0px;font-size:24px;line-height:31px;color:#05070a;font-family:"DejaVu Sans","Liberation Sans",sans-serif;">⌘</span>
<span style="left:365.0px;top:305.0px;font-size:26px;line-height:34px;color:#05070a;">K</span>
<div style="left:414px;top:291px;width:61px;height:62px;border-radius:11px;background:#343945;border:2px solid #3e434f;"></div>
<svg style="left:432.5px;top:309.5px" width="23.5" height="25.5" viewBox="0 0 26 28"><path d="M16.5 0.5 L1.5 16.5 H11 L9 27.5 L24.5 11.5 H14.5 Z" fill="#27a470" stroke="#27a470" stroke-width="1.5" stroke-linejoin="round"/></svg>
<div style="left:0;top:722px;width:493px;height:79px;border-radius:13px;background:#11151f;"></div>
<span style="left:97.0px;top:425.0px;font-size:30px;line-height:39px;color:#8b8d93;letter-spacing:0.32px;-webkit-text-stroke:0.6px #8b8d93;">Launchpad</span>
<span style="left:97.0px;top:504.2px;font-size:30px;line-height:39px;color:#8b8d93;letter-spacing:0.16px;-webkit-text-stroke:0.6px #8b8d93;">Dashboard</span>
<span style="left:97.0px;top:583.4px;font-size:30px;line-height:39px;color:#8b8d93;letter-spacing:0.48px;-webkit-text-stroke:0.6px #8b8d93;">Conversations</span>
<span style="left:97.0px;top:662.6px;font-size:30px;line-height:39px;color:#8b8d93;letter-spacing:0.10px;-webkit-text-stroke:0.6px #8b8d93;">Calendars</span>
<span style="left:97.0px;top:741.8px;font-size:30px;line-height:39px;color:#b6b7ba;letter-spacing:0.60px;-webkit-text-stroke:0.6px #b6b7ba;">Contacts</span>
<span style="left:97.0px;top:821.0px;font-size:30px;line-height:39px;color:#8b8d93;letter-spacing:0.68px;-webkit-text-stroke:0.6px #8b8d93;">Opportunities</span>
<span style="left:97.0px;top:900.2px;font-size:30px;line-height:39px;color:#8b8d93;letter-spacing:1.02px;-webkit-text-stroke:0.6px #8b8d93;">Tickets</span>
<span style="left:97.0px;top:979.4px;font-size:30px;line-height:39px;color:#8b8d93;letter-spacing:0.26px;-webkit-text-stroke:0.6px #8b8d93;">Houses</span>
<span style="left:97.0px;top:1058.6px;font-size:30px;line-height:39px;color:#8b8d93;letter-spacing:-0.34px;-webkit-text-stroke:0.6px #8b8d93;">Events</span>
<span style="left:97.0px;top:1137.8px;font-size:30px;line-height:39px;color:#8b8d93;letter-spacing:0.41px;-webkit-text-stroke:0.6px #8b8d93;">4th Custom Object</span>
<span style="left:97.0px;top:1217.0px;font-size:30px;line-height:39px;color:#8b8d93;letter-spacing:0.37px;-webkit-text-stroke:0.6px #8b8d93;">Payments</span>
<span style="left:97.0px;top:1368.9px;font-size:30px;line-height:39px;color:#8b8d93;letter-spacing:0.79px;-webkit-text-stroke:0.6px #8b8d93;">Marketing</span>
<span style="left:97.0px;top:1448.2px;font-size:30px;line-height:39px;color:#8b8d93;letter-spacing:0.86px;-webkit-text-stroke:0.6px #8b8d93;">Automation</span>
<span style="left:97.0px;top:1527.5px;font-size:30px;line-height:39px;color:#8b8d93;letter-spacing:0.20px;-webkit-text-stroke:0.6px #8b8d93;">Sites</span>
<span style="left:97.0px;top:1606.8px;font-size:30px;line-height:39px;color:#8b8d93;letter-spacing:0.74px;-webkit-text-stroke:0.6px #8b8d93;">Memberships</span>
<span style="left:97.0px;top:1686.1px;font-size:30px;line-height:39px;color:#8b8d93;letter-spacing:0.32px;-webkit-text-stroke:0.6px #8b8d93;">Media Storage</span>
<span style="left:97.0px;top:1765.4px;font-size:30px;line-height:39px;color:#8b8d93;letter-spacing:0.38px;-webkit-text-stroke:0.6px #8b8d93;">Reputation</span>
<span style="left:97.0px;top:1844.7px;font-size:30px;line-height:39px;color:#8b8d93;letter-spacing:0.43px;-webkit-text-stroke:0.6px #8b8d93;">Reporting</span>
<span style="left:97.0px;top:1924.0px;font-size:30px;line-height:39px;color:#8b8d93;letter-spacing:0.56px;-webkit-text-stroke:0.6px #8b8d93;">App Marketplace</span>
<div style="left:35px;top:1312px;width:423px;height:2px;background:#9d9fa4;"></div>
<div style="left:0;top:1985px;width:493px;height:30px;overflow:hidden;"><span style="left:97.0px;top:18.0px;font-size:30px;line-height:39px;color:#8b8d93;letter-spacing:0.40px;-webkit-text-stroke:0.6px #8b8d93;">Mobile App</span><svg style="left:44px;top:17px" width="30" height="40" viewBox="0 0 30 40"><rect x="1.6" y="1.6" width="24" height="36" rx="5" fill="none" stroke="#85878e" stroke-width="3.2"/></svg></div>
<svg style="left:32.3px;top:2072.8px" width="48" height="48" viewBox="0 0 48 48"><path d="M24.00 5.10 L24.66 5.22 L25.29 5.59 L25.88 6.16 L26.40 6.90 L26.87 7.75 L27.26 8.65 L27.61 9.53 L27.92 10.34 L28.22 11.01 L28.54 11.53 L28.91 11.85 L29.35 11.97 L29.89 11.92 L30.53 11.71 L31.27 11.40 L32.11 11.03 L33.00 10.65 L33.93 10.33 L34.85 10.11 L35.71 10.04 L36.48 10.14 L37.11 10.42 L37.58 10.89 L37.86 11.52 L37.96 12.29 L37.89 13.15 L37.67 14.07 L37.35 15.00 L36.97 15.89 L36.60 16.72 L36.29 17.47 L36.08 18.11 L36.03 18.65 L36.15 19.09 L36.47 19.46 L36.99 19.78 L37.66 20.08 L38.47 20.39 L39.35 20.74 L40.25 21.13 L41.10 21.60 L41.84 22.12 L42.41 22.71 L42.78 23.34 L42.90 24.00 L42.78 24.66 L42.41 25.29 L41.84 25.88 L41.10 26.40 L40.25 26.87 L39.35 27.26 L38.47 27.61 L37.66 27.92 L36.99 28.22 L36.47 28.54 L36.15 28.91 L36.03 29.35 L36.08 29.89 L36.29 30.53 L36.60 31.27 L36.97 32.11 L37.35 33.00 L37.67 33.93 L37.89 34.85 L37.96 35.71 L37.86 36.48 L37.58 37.11 L37.11 37.58 L36.48 37.86 L35.71 37.96 L34.85 37.89 L33.93 37.67 L33.00 37.35 L32.11 36.97 L31.27 36.60 L30.53 36.29 L29.89 36.08 L29.35 36.03 L28.91 36.15 L28.54 36.47 L28.22 36.99 L27.92 37.66 L27.61 38.47 L27.26 39.35 L26.87 40.25 L26.40 41.10 L25.88 41.84 L25.29 42.41 L24.66 42.78 L24.00 42.90 L23.34 42.78 L22.71 42.41 L22.12 41.84 L21.60 41.10 L21.13 40.25 L20.74 39.35 L20.39 38.47 L20.08 37.66 L19.78 36.99 L19.46 36.47 L19.09 36.15 L18.65 36.03 L18.11 36.08 L17.47 36.29 L16.72 36.60 L15.89 36.97 L15.00 37.35 L14.07 37.67 L13.15 37.89 L12.29 37.96 L11.52 37.86 L10.89 37.58 L10.42 37.11 L10.14 36.48 L10.04 35.71 L10.11 34.85 L10.33 33.93 L10.65 33.00 L11.03 32.11 L11.40 31.28 L11.71 30.53 L11.92 29.89 L11.97 29.35 L11.85 28.91 L11.53 28.54 L11.01 28.22 L10.34 27.92 L9.53 27.61 L8.65 27.26 L7.75 26.87 L6.90 26.40 L6.16 25.88 L5.59 25.29 L5.22 24.66 L5.10 24.00 L5.22 23.34 L5.59 22.71 L6.16 22.12 L6.90 21.60 L7.75 21.13 L8.65 20.74 L9.53 20.39 L10.34 20.08 L11.01 19.78 L11.53 19.46 L11.85 19.09 L11.97 18.65 L11.92 18.11 L11.71 17.47 L11.40 16.72 L11.03 15.89 L10.65 15.00 L10.33 14.07 L10.11 13.15 L10.04 12.29 L10.14 11.52 L10.42 10.89 L10.89 10.42 L11.52 10.14 L12.29 10.04 L13.15 10.11 L14.07 10.33 L15.00 10.65 L15.89 11.03 L16.72 11.40 L17.47 11.71 L18.11 11.92 L18.65 11.97 L19.09 11.85 L19.46 11.53 L19.78 11.01 L20.08 10.34 L20.39 9.53 L20.74 8.65 L21.13 7.75 L21.60 6.90 L22.12 6.16 L22.71 5.59 L23.34 5.22 Z" fill="none" stroke="#85878e" stroke-width="3.3" stroke-linejoin="round"/><circle cx="24" cy="24" r="5.1" fill="none" stroke="#85878e" stroke-width="3.3"/></svg>
<span style="left:97.3px;top:2076.5px;font-size:30px;line-height:39px;color:#8b8d93;letter-spacing:0.66px;-webkit-text-stroke:0.6px #8b8d93;">Settings</span>
<div style="left:467px;top:2078px;width:43px;height:43px;border-radius:22px;background:#259669;"></div>
<svg style="left:479px;top:2088px" width="16" height="24" viewBox="0 0 16 24"><path d="M12 3 L4 12 L12 21" fill="none" stroke="#134f38" stroke-width="4.2" stroke-linecap="round" stroke-linejoin="round"/></svg>
<svg style="left:20px;top:400px" width="80" height="340" viewBox="0 0 356 1512" fill="none" stroke-linecap="round" stroke-linejoin="round"><circle cx="165" cy="200" r="95" stroke="#3a3f4b" stroke-width="9"/><path d="M165 105 A95 95 0 0 1 255.4 170.6" stroke="#a8622a" stroke-width="11" stroke-linecap="butt"/><path d="M147 249 V205 H124 L165 155 L206 205 H183 V249 Z" stroke="#85878e" stroke-width="12" stroke-linejoin="miter"/><g stroke="#85878e" stroke-width="14.5" stroke-linejoin="miter"><rect x="92" y="483" width="58" height="40"/><rect x="177" y="483" width="58" height="70"/><rect x="92" y="552" width="58" height="71"/><rect x="177" y="582" width="58" height="41"/></g><path d="M137 960.5 A68 68 0 1 0 107.5 931 L92.4 975.6 Z" stroke="#85878e" stroke-width="14"/><g stroke="#85878e" stroke-width="14"><rect x="92" y="1200" width="141" height="140" rx="14"/><path d="M130 1182 V1220 M193 1182 V1220 M92 1252 H233"/></g></svg>
<svg style="left:20px;top:720px" width="80" height="340" viewBox="0 0 356 1512" fill="none" stroke-linecap="round" stroke-linejoin="round"><g stroke="#b6b7ba" stroke-width="14.5"><rect x="105" y="112" width="130" height="156" rx="14"/><path d="M82 133 H116 M82 190 H116 M82 245 H116"/><rect x="130" y="146" width="76" height="30" rx="15" stroke-width="12"/></g><g stroke="#85878e" stroke-width="12.5"><circle cx="165" cy="488" r="18"/><path d="M143 562 V543 Q143 526 165 526 Q187 526 187 543 V562 L180 567 V598 Q180 608 165 608 Q150 608 150 598 V567 Z"/><path d="M118 527 L84 492 M212 527 L246 492 M118 550 L84 585 M212 550 L246 585"/></g><g fill="#85878e" stroke="#85878e" stroke-width="5" stroke-linejoin="miter"><path d="M78 486 H108 L78 516 Z"/><path d="M252 486 H222 L252 516 Z"/><path d="M78 591 H108 L78 561 Z"/><path d="M252 591 H222 L252 561 Z"/></g><g fill="#5d616d" stroke="none"><path d="M85 888 L135 838 L185 888 L135 938 Z"/><path d="M165 848 L205 808 L245 848 L205 888 Z"/><path d="M165 930 L205 890 L245 930 L205 970 Z"/></g><g fill="#202534" stroke="none"><path d="M108 888 L140 863 V913 Z"/><path d="M188 848 L211 831 V865 Z"/><path d="M188 930 L211 913 V947 Z"/></g><path d="M90 1245 L110 1195 Q114 1183 127 1183 H203 Q216 1183 220 1195 L240 1245 V1305 Q240 1315 230 1315 H222 Q212 1315 212 1305 V1295 H118 V1305 Q118 1315 108 1315 H100 Q90 1315 90 1305 Z" fill="#5d616d"/><path d="M113 1232 L125 1201 H205 L217 1232 Z" fill="#202534"/><circle cx="118" cy="1262" r="11" fill="#202534"/><circle cx="212" cy="1262" r="11" fill="#202534"/></svg>
<svg style="left:20px;top:1040px" width="80" height="340" viewBox="0 0 356 1512" fill="none" stroke-linecap="round" stroke-linejoin="round"><path d="M165 78 L262 118 V235 L165 270 L68 235 V118 Z M68 118 L165 158 L262 118 M165 158 V270" stroke="#656873" stroke-width="11"/><path d="M165 430 L262 470 V587 L165 622 L68 587 V470 Z M68 470 L165 510 L262 470 M165 510 V622" stroke="#656873" stroke-width="11"/><g stroke="#85878e" stroke-width="13"><path d="M92 812 H235" /><path d="M115 815 V950 H210 V815" stroke-linejoin="miter"/></g><text x="162.5" y="912" text-anchor="middle" style="font-family:Liberation Sans,sans-serif;font-weight:700;font-size:84px" fill="#85878e" stroke="none">$</text></svg>
<svg style="left:20px;top:1350px" width="80" height="340" viewBox="0 0 356 1512" fill="none" stroke-linecap="round" stroke-linejoin="round"><g stroke="#85878e" stroke-width="11"><path d="M80 155 L245 95 L183 260 L150 185 Z M150 185 L245 95"/><path d="M243 522 A82 82 0 1 0 160 609"/><path d="M140 497 L197 530 L140 562 Z"/><rect x="82" y="802" width="162" height="158" stroke-linejoin="miter"/><path d="M82 834 H244"/><g stroke-width="8"><circle cx="162" cy="897" r="34"/><ellipse cx="162" cy="897" rx="14" ry="34"/><path d="M128 897 H196"/></g><path d="M230.0 1200.0 L229.4 1203.4 L227.7 1206.6 L225.2 1209.5 L222.7 1212.3 L220.6 1214.9 L219.2 1217.6 L218.7 1220.6 L218.9 1224.0 L219.4 1227.7 L219.6 1231.5 L219.1 1235.1 L217.6 1238.2 L215.1 1240.6 L211.8 1242.2 L208.1 1243.1 L204.5 1243.8 L201.2 1244.7 L198.5 1246.1 L196.3 1248.3 L194.5 1251.1 L192.7 1254.4 L190.6 1257.6 L188.1 1260.2 L185.1 1261.8 L181.7 1262.3 L178.1 1261.6 L174.5 1260.2 L171.2 1258.7 L168.0 1257.5 L165.0 1257.0 L162.0 1257.5 L158.8 1258.7 L155.5 1260.2 L151.9 1261.6 L148.3 1262.3 L144.9 1261.8 L141.9 1260.2 L139.4 1257.6 L137.3 1254.4 L135.5 1251.1 L133.7 1248.3 L131.5 1246.1 L128.8 1244.7 L125.5 1243.8 L121.9 1243.1 L118.2 1242.2 L114.9 1240.6 L112.4 1238.2 L110.9 1235.1 L110.4 1231.5 L110.6 1227.7 L111.1 1224.0 L111.3 1220.6 L110.8 1217.6 L109.4 1214.9 L107.3 1212.3 L104.8 1209.5 L102.3 1206.6 L100.6 1203.4 L100.0 1200.0 L100.6 1196.6 L102.3 1193.4 L104.8 1190.5 L107.3 1187.7 L109.4 1185.1 L110.8 1182.4 L111.3 1179.4 L111.1 1176.0 L110.6 1172.3 L110.4 1168.5 L110.9 1164.9 L112.4 1161.8 L114.9 1159.4 L118.2 1157.8 L121.9 1156.9 L125.5 1156.2 L128.8 1155.3 L131.5 1153.9 L133.7 1151.7 L135.5 1148.9 L137.3 1145.6 L139.4 1142.4 L141.9 1139.8 L144.9 1138.2 L148.3 1137.7 L151.9 1138.4 L155.5 1139.8 L158.8 1141.3 L162.0 1142.5 L165.0 1143.0 L168.0 1142.5 L171.2 1141.3 L174.5 1139.8 L178.1 1138.4 L181.7 1137.7 L185.1 1138.2 L188.1 1139.8 L190.6 1142.4 L192.7 1145.6 L194.5 1148.9 L196.3 1151.7 L198.5 1153.9 L201.2 1155.3 L204.5 1156.2 L208.1 1156.9 L211.8 1157.8 L215.1 1159.4 L217.6 1161.8 L219.1 1164.9 L219.6 1168.5 L219.4 1172.3 L218.9 1176.0 L218.7 1179.4 L219.2 1182.4 L220.6 1185.1 L222.7 1187.7 L225.2 1190.5 L227.7 1193.4 L229.4 1196.6 L230.0 1200.0 Z" stroke-width="12"/><path d="M131 1256 L122 1306 L165 1285 L208 1306 L199 1256" stroke-width="12" stroke-linejoin="round"/></g></svg>
<svg style="left:20px;top:1670px" width="80" height="340" viewBox="0 0 356 1512" fill="none" stroke-linecap="round" stroke-linejoin="round"><g stroke="#85878e" stroke-width="15"><rect x="88" y="78" width="152" height="155" rx="24"/><circle cx="135" cy="127" r="17" stroke-width="12"/><path d="M110 226 L205 140 L240 180"/><path d="M162.0 435.0 L184.3 484.3 L238.1 490.3 L198.1 526.7 L209.0 579.7 L162.0 553.0 L115.0 579.7 L125.9 526.7 L85.9 490.3 L139.7 484.3 Z" stroke-width="12.5" stroke-linejoin="round"/><path d="M75 913 L135 855 L175 895 L248 824 M198 820 H250 V872" stroke-linejoin="round"/><rect x="88" y="1138" width="62" height="60" rx="12"/><rect x="178" y="1138" width="62" height="60" rx="12"/><rect x="88" y="1228" width="62" height="60" rx="12"/><rect x="178" y="1228" width="62" height="60" rx="12"/></g></svg>
<div style="left:0;top:0;width:3452px;height:6px;background:#000;"></div>
<div id="panel" style="left:2576px;top:6px;width:876px;height:2148px;background:#fff;border-top-left-radius:6px;box-shadow:-8px 0 26px rgba(0,0,0,.13);overflow:hidden;">
<span style="left:54.0px;top:39.0px;font-size:43px;line-height:56px;color:#0f1729;letter-spacing:0.42px;-webkit-text-stroke:1.2px #0f1729;">Advanced Filters</span>
<div style="left:783px;top:31px;width:49px;height:48px;border-radius:7px;background:#ebebeb;"></div>
<svg style="left:795px;top:42px" width="26" height="26" viewBox="0 0 26 26"><path d="M2 2 L24 24 M24 2 L2 24" fill="none" stroke="#50545c" stroke-width="3.2" stroke-linecap="round"/></svg>
<div style="left:0;top:136px;width:900px;height:2px;background:#e9ebf3;"></div>
<div style="left:62px;top:174px;width:756px;height:92px;border-radius:14px;border:2.5px solid #7ea5f6;background:#fff;box-shadow:inset 0 0 0 2px #d9dce2;"></div>
<svg style="left:97px;top:201px" width="38" height="38" viewBox="0 0 38 38"><circle cx="17" cy="17" r="14.5" fill="none" stroke="#56627a" stroke-width="3.4"/><path d="M28 28 L35 35" stroke="#56627a" stroke-width="3.4" stroke-linecap="round"/></svg>
<span style="left:148.0px;top:198.0px;font-size:33.5px;line-height:44px;color:#626d82;letter-spacing:-0.37px;">Search Field</span>
<div style="left:0;top:318px;width:900px;height:115px;background:#f2f4f8;"></div>
<svg style="left:64px;top:368px" width="26" height="16" viewBox="0 0 26 16"><path d="M2 2 L13 13.5 L24 2" fill="none" stroke="#5c6780" stroke-width="3.4" stroke-linecap="round" stroke-linejoin="round"/></svg>
<span style="left:126.0px;top:355.5px;font-size:31.5px;line-height:41px;color:#0f1729;letter-spacing:0.91px;-webkit-text-stroke:0.5px #0f1729;">Contact Information</span>
<span style="left:89.3px;top:461.1px;font-size:31.5px;line-height:41px;color:#2b3549;letter-spacing:0.41px;">Address</span>
<div style="left:0;top:529.4px;width:900px;height:2px;background:#e7e9f1;"></div>
<span style="left:89.3px;top:559.9px;font-size:31.5px;line-height:41px;color:#2b3549;letter-spacing:-0.18px;">Age</span>
<div style="left:0;top:628.2px;width:900px;height:2px;background:#e7e9f1;"></div>
<span style="left:89.3px;top:658.7px;font-size:31.5px;line-height:41px;color:#2b3549;letter-spacing:0.44px;">Assigned</span>
<div style="left:0;top:727.0px;width:900px;height:2px;background:#e7e9f1;"></div>
<span style="left:89.3px;top:757.5px;font-size:31.5px;line-height:41px;color:#2b3549;letter-spacing:0.22px;">Birth Date</span>
<div style="left:0;top:825.8px;width:900px;height:2px;background:#e7e9f1;"></div>
<span style="left:89.3px;top:856.3px;font-size:31.5px;line-height:41px;color:#2b3549;letter-spacing:0.20px;">Business Name</span>
<div style="left:0;top:924.6px;width:900px;height:2px;background:#e7e9f1;"></div>
<span style="left:89.3px;top:955.1px;font-size:31.5px;line-height:41px;color:#2b3549;letter-spacing:0.36px;">City</span>
<div style="left:0;top:1023.4px;width:900px;height:2px;background:#e7e9f1;"></div>
<span style="left:89.3px;top:1053.9px;font-size:31.5px;line-height:41px;color:#2b3549;letter-spacing:0.41px;">Company Name</span>
<div style="left:0;top:1122.2px;width:900px;height:2px;background:#e7e9f1;"></div>
<span style="left:89.3px;top:1152.7px;font-size:31.5px;line-height:41px;color:#2b3549;letter-spacing:0.37px;">Country</span>
<div style="left:0;top:1221.0px;width:900px;height:2px;background:#e7e9f1;"></div>
<span style="left:89.3px;top:1251.5px;font-size:31.5px;line-height:41px;color:#2b3549;letter-spacing:0.37px;">Created</span>
<div style="left:0;top:1319.8px;width:900px;height:2px;background:#e7e9f1;"></div>
<span style="left:89.3px;top:1350.3px;font-size:31.5px;line-height:41px;color:#2b3549;letter-spacing:0.35px;">Created By</span>
<div style="left:0;top:1418.6px;width:900px;height:2px;background:#e7e9f1;"></div>
<span style="left:89.3px;top:1449.1px;font-size:31.5px;line-height:41px;color:#2b3549;letter-spacing:0.39px;">Email</span>
<div style="left:0;top:1517.4px;width:900px;height:2px;background:#e7e9f1;"></div>
<span style="left:89.3px;top:1547.9px;font-size:31.5px;line-height:41px;color:#2b3549;letter-spacing:0.35px;">Facebook Id</span>
<div style="left:0;top:1616.2px;width:900px;height:2px;background:#e7e9f1;"></div>
<span style="left:89.3px;top:1646.7px;font-size:31.5px;line-height:41px;color:#2b3549;letter-spacing:0.34px;">First Name</span>
<div style="left:0;top:1715.0px;width:900px;height:2px;background:#e7e9f1;"></div>
<span style="left:89.3px;top:1745.5px;font-size:31.5px;line-height:41px;color:#2b3549;letter-spacing:0.34px;">Followers</span>
<div style="left:0;top:1813.8px;width:900px;height:2px;background:#e7e9f1;"></div>
<span style="left:89.3px;top:1844.3px;font-size:31.5px;line-height:41px;color:#2b3549;letter-spacing:-0.15px;">Full Name</span>
<div style="left:0;top:1912.6px;width:900px;height:2px;background:#e7e9f1;"></div>
<span style="left:89.3px;top:1943.1px;font-size:31.5px;line-height:41px;color:#2b3549;letter-spacing:0.18px;">Google Id</span>
<div style="left:0;top:2011.4px;width:900px;height:2px;background:#e7e9f1;"></div>
<span style="left:89.3px;top:2041.9px;font-size:31.5px;line-height:41px;color:#2b3549;letter-spacing:0.29px;">Instagram Id</span>
<div style="left:0;top:2110.2px;width:900px;height:2px;background:#e7e9f1;"></div>
</div>
</div></body></html>
